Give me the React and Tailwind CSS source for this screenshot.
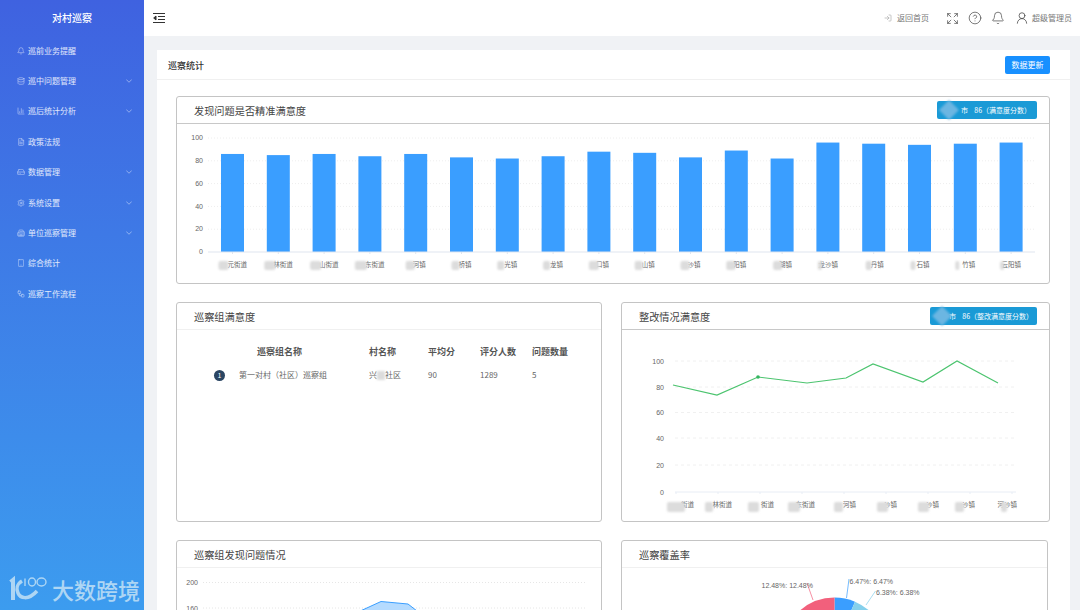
import React from 'react';
import {
  Bell, Database, BarChart3, FileText, HardDrive, Settings, Building2, Tablet, Workflow,
  ChevronDown, LogIn, Expand, CircleHelp, UserRound,
} from 'lucide-react';

const menu = [
  { label: '巡前业务提醒', icon: Bell },
  { label: '巡中问题管理', icon: Database, arrow: true },
  { label: '巡后统计分析', icon: BarChart3, arrow: true },
  { label: '政策法规', icon: FileText },
  { label: '数据管理', icon: HardDrive, arrow: true },
  { label: '系统设置', icon: Settings, arrow: true },
  { label: '单位巡察管理', icon: Building2, arrow: true },
  { label: '综合统计', icon: Tablet },
  { label: '巡察工作流程', icon: Workflow },
];

const barValues = [86, 85, 86, 84, 86, 83, 82, 84, 88, 87, 83, 89, 82, 96, 95, 94, 95, 96];
// only the fragments that the masks in the picture leave readable
const barLabels = ['元街道', '林街道', '山街道', '东街道', '河镇', '桥镇', '光镇', '龙镇', '口镇', '山镇', '沙镇', '阳镇', '湖镇', '龙沙镇', '丹镇', '石镇', '竹镇', '云阳镇'];
const barBlobs = [[-14, 10], [-14, 11], [-14, 11], [-15, 12], [-10, 9], [-10, 8], [-10, 7], [-10, 7], [-10, 10], [-10, 8], [-10, 9], [-10, 9], [-9, 9], [-10, 4], [-8, 6], [-9, 5], [-10, 4], [-11, 4]];

const linePoints = [[673, 385], [717, 395], [758, 377], [807, 383], [846, 378], [873, 364], [923, 382], [957, 361], [998, 383]];
// text, right edge of the text, mask x, mask width
const lineLabels = [['街道', 694, 667, 18], ['林街道', 732, 705, 8], ['街道', 774, 748, 11], ['东街道', 815, 788, 12], ['河镇', 856, 834, 9], ['沙镇', 897, 877, 11], ['沙镇', 939, 918, 11], ['沙镇', 975, 955, 9], ['河沙镇', 1017, 1001, 6]];

function Blob({ x, y, w, h = 9 }) {
  return <rect x={x} y={y} width={w} height={h} rx="2" fill="#dcdcdc" className="blur-[1px]" />;
}

function AxisLabel({ x, y, children }) {
  return (
    <text x={x} y={y} textAnchor="end" fontSize="7" fill="#666" fontFamily="Liberation Sans, sans-serif">
      {children}
    </text>
  );
}

const Card = ({ title, badge, light, className, children }) => (
  <div className={`bg-white border border-[#c4c4c4] rounded-[3px] overflow-hidden ${className}`}>
    <div className={`h-[27px] flex items-center justify-between pl-[17px] pr-[12px] border-b ${light ? 'border-[#f0f0f0]' : 'border-[#c8c8c8]'}`}>
      <span className="mt-[2px] text-[10.2px] text-[#444]">{title}</span>
      {badge}
    </div>
    {children}
  </div>
);

const Badge = ({ text, className }) => (
  <div className={`relative h-[18px] bg-[#1a9ad6] rounded-[2px] flex items-center text-[7px] text-white whitespace-pre ${className}`}>
    <span className="absolute left-[5px] top-[2px] w-[14px] h-[14px] rotate-45 bg-[#6bb6e2] blur-[1px]" />
    {text}
  </div>
);

const BarChart = () => (
  <svg width="872" height="159" viewBox="177 124 872 159" className="block">
    {[100, 80, 60, 40, 20].map((v) => {
      const y = 252 - v * 1.14;
      return <line key={v} x1="208" x2="1035" y1={y} y2={y} stroke="#eeeeee" strokeWidth="1" strokeDasharray="1 2" />;
    })}
    {[100, 80, 60, 40, 20, 0].map((v) => (
      <AxisLabel key={v} x="203" y={254.2 - v * 1.14}>{v}</AxisLabel>
    ))}
    {barValues.map((v, i) => {
      const x = 221 + i * 45.8;
      const h = v * 1.14;
      const street = i < 4;
      return (
        <g key={i}>
          <rect x={x} y={252 - h} width="23" height={h} fill="#3a9eff" />
          <line x1={x + 11.5} x2={x + 11.5} y1="252" y2="254" stroke="#dfe5ef" />
          <text x={x + 11.5 + (street ? 14.5 : 10)} y="267" textAnchor="end" fontSize="6.5" fill="#666" fontFamily="Noto Sans CJK SC, sans-serif">
            {barLabels[i]}
          </text>
          <Blob x={x + 11.5 + barBlobs[i][0]} y="261" w={barBlobs[i][1]} />
        </g>
      );
    })}
    <line x1="208" x2="1035" y1="252" y2="252" stroke="#dfe5ef" />
  </svg>
);

const LineChart = () => (
  <svg width="427" height="190" viewBox="622 330 427 190" className="block">
    {[[100, 361], [80, 387], [60, 412.5], [40, 438], [20, 465], [0, 492]].map(([v, y]) => (
      <g key={v}>
        <line x1="675" x2="1016" y1={y} y2={y} stroke={v === 0 ? '#e8edf5' : '#f0f0f0'} strokeDasharray={v === 0 ? undefined : '3 3'} />
        <AxisLabel x="664" y={y + 2.5}>{v}</AxisLabel>
      </g>
    ))}
    <polyline points={linePoints.map((p) => p.join(',')).join(' ')} fill="none" stroke="#4cc46f" strokeWidth="1.2" />
    <circle cx="758" cy="377" r="1.8" fill="#34b560" />
    {lineLabels.map(([text, x, blobX, blobW], i) => (
      <g key={i}>
        <line x1={676 + i * 42} x2={676 + i * 42} y1="492" y2="494" stroke="#e8edf5" />
        <text x={x} y="507" textAnchor="end" fontSize="6.5" fill="#666" fontFamily="Noto Sans CJK SC, sans-serif">{text}</text>
        <Blob x={blobX} y="502" w={blobW} h="10" />
      </g>
    ))}
  </svg>
);

const AreaChart = () => (
  <svg width="424" height="60" viewBox="177 568 424 60" className="block">
    <line x1="203" x2="586" y1="582.5" y2="582.5" stroke="#e6e6e6" strokeDasharray="1 2" />
    <line x1="203" x2="586" y1="608" y2="608" stroke="#e6e6e6" strokeDasharray="1 2" />
    <AxisLabel x="198" y="585">200</AxisLabel>
    <AxisLabel x="198" y="610.5">160</AxisLabel>
    <polygon points="345,618 381,601.5 408,604 426,618" fill="#b5dbff" stroke="#3a9eff" strokeWidth="1" />
  </svg>
);

const PieChart = () => (
  <svg width="425" height="60" viewBox="622 568 425 60" className="block">
    <path d="M834.5 650 L834.5 597.5 A52.5 52.5 0 0 1 855 601.7 Z" fill="#3a9eff" />
    <path d="M855 601.7 A52.5 52.5 0 0 1 872.5 613.8 L834.5 650 Z" fill="#85d0ec" />
    <path d="M834.5 650 L834.5 597.5 A52.5 52.5 0 0 0 797.4 612.9 Z" fill="#f2607c" />
    <path d="M813 600 L807 583" stroke="#f2607c" strokeWidth="0.7" fill="none" />
    <path d="M846.5 598 L849 579" stroke="#3a9eff" strokeWidth="0.7" fill="none" />
    <path d="M866 605 L875.5 591" stroke="#85d0ec" strokeWidth="0.7" fill="none" />
    <g fontSize="7" fill="#666" fontFamily="Liberation Sans, sans-serif">
      <text x="761.5" y="587.5">12.48%: 12.48%</text>
      <text x="849.5" y="584">6.47%: 6.47%</text>
      <text x="876" y="595">6.38%: 6.38%</text>
    </g>
  </svg>
);

const Watermark = () => (
  <div className="absolute left-[9px] top-[575px] flex items-center gap-[5px] text-[#aed6f4]">
    <svg width="38" height="28" viewBox="0 0 38 28" fill="none" stroke="currentColor">
      <path d="M1.5 7 L4 5 V25" strokeWidth="4" />
      <path d="M13 6 C8 9 7 14 9 18 C11 23 19 26 28 16" strokeWidth="3.5" />
      <path d="M16 3.5 V11" strokeWidth="1.4" />
      <ellipse cx="23" cy="7" rx="3.5" ry="4" strokeWidth="1.4" />
      <ellipse cx="32.5" cy="7" rx="4.5" ry="4" strokeWidth="1.4" />
    </svg>
    <span className="text-[22px] leading-none font-medium font-['Noto_Sans_CJK_SC',sans-serif]">大数跨境</span>
  </div>
);

export default function App() {
  return (
    <div className="relative flex w-[1080px] h-[610px] overflow-hidden bg-[#f0f2f5] font-['Noto_Sans_CJK_SC','Liberation_Sans',sans-serif]">
      {/* sidebar */}
      <aside className="w-[144px] shrink-0 bg-gradient-to-b from-[#3f62e0] to-[#3c9cef] text-white">
        <div className="h-[35.5px] flex items-center justify-center text-[10px] font-medium">对村巡察</div>
        <nav className="flex flex-col">
          {menu.map(({ label, icon: Icon, arrow }) => (
            <div key={label} className="h-[30.4px] flex items-center pl-[17px] pr-[10px] text-[8px] text-white/85">
              <Icon size={8} className="mr-[3px] opacity-70 shrink-0" />
              <span className="flex-1">{label}</span>
              {arrow && <ChevronDown size={10} className="opacity-60" />}
            </div>
          ))}
        </nav>
      </aside>

      <div className="flex-1 min-w-0 flex flex-col">
        {/* header */}
        <header className="h-[36px] shrink-0 bg-white flex items-center pl-[9px] pr-[8px] text-[#777]">
          <svg width="12" height="10" viewBox="0 0 12 10" fill="none" stroke="#333" strokeWidth="1">
            <path d="M0 .5H12M5 3.5H12M5 6.5H12M0 9.5H12" />
            <path d="M3 3 L.7 5 L3 7 Z" fill="#333" />
          </svg>
          <div className="ml-auto flex items-center text-[8px]">
            <LogIn size={8} className="text-[#aaa] mr-[5px]" />
            <span>返回首页</span>
            <Expand size={13} strokeWidth={1.3} className="ml-[17px] text-[#444]" />
            <CircleHelp size={14} strokeWidth={1.2} className="ml-[9px] text-[#444]" />
            <Bell size={14} strokeWidth={1.2} className="ml-[9px] text-[#444]" />
            <UserRound size={14} strokeWidth={1.3} className="ml-[10px] text-[#444]" />
            <span className="ml-[3px]">超级管理员</span>
          </div>
        </header>

        <main className="pt-[14px] pl-[13px] pr-[10px]">
          <div className="bg-white">
            <div className="h-[30px] flex items-center justify-between pl-[11px] pr-[20px] border-b border-[#f0f0f0]">
              <span className="mt-[2px] text-[9px] font-medium text-[#333]">巡察统计</span>
              <button className="mt-[1px] w-[45px] h-[18px] bg-[#1890ff] rounded-[2px] text-[8px] text-white">数据更新</button>
            </div>

            <div className="pl-[19px] pr-[20px] pt-[16px] flex flex-col gap-[18px]">
              <Card title="发现问题是否精准满意度" className="h-[188px]" badge={<Badge text="市    86（满意度分数）" className="w-[100px] pl-[24px]" />}>
                <BarChart />
              </Card>

              <div className="grid grid-cols-[426px_429px] gap-[19px]">
                <Card title="巡察组满意度" light className="h-[220px]">
                  <div className="grid grid-cols-[155px_59px_52px_52px_1fr] pl-[37px] pt-[15px] text-[8px] text-[#666]">
                    <div className="pl-[43px] h-[18px] font-bold text-[9px] text-[#555]">巡察组名称</div>
                    <div className="font-bold text-[9px] text-[#555]">村名称</div>
                    <div className="font-bold text-[9px] text-[#555]">平均分</div>
                    <div className="font-bold text-[9px] text-[#555]">评分人数</div>
                    <div className="font-bold text-[9px] text-[#555]">问题数量</div>
                    <div className="flex items-center h-[24px]">
                      <span className="w-[11px] h-[11px] rounded-full bg-[#2b4663] text-white text-[7px] flex items-center justify-center mr-[14px]">1</span>
                      第一对村（社区）巡察组
                    </div>
                    <div className="relative flex items-center">
                      兴<span className="w-[8px] h-[9px] bg-[#dcdcdc] blur-[1px]" />社区
                    </div>
                    <div className="flex items-center">90</div>
                    <div className="flex items-center">1289</div>
                    <div className="flex items-center">5</div>
                  </div>
                </Card>
                <Card title="整改情况满意度" className="h-[220px]" badge={<Badge text="市    86（整改满意度分数）" className="w-[107px] pl-[19px]" />}>
                  <LineChart />
                </Card>
              </div>

              <div className="grid grid-cols-[426px_427px] gap-[19px]">
                <Card title="巡察组发现问题情况" light className="h-[220px]">
                  <AreaChart />
                </Card>
                <Card title="巡察覆盖率" light className="h-[220px]">
                  <PieChart />
                </Card>
              </div>
            </div>
          </div>
        </main>
      </div>

      <Watermark />
    </div>
  );
}
